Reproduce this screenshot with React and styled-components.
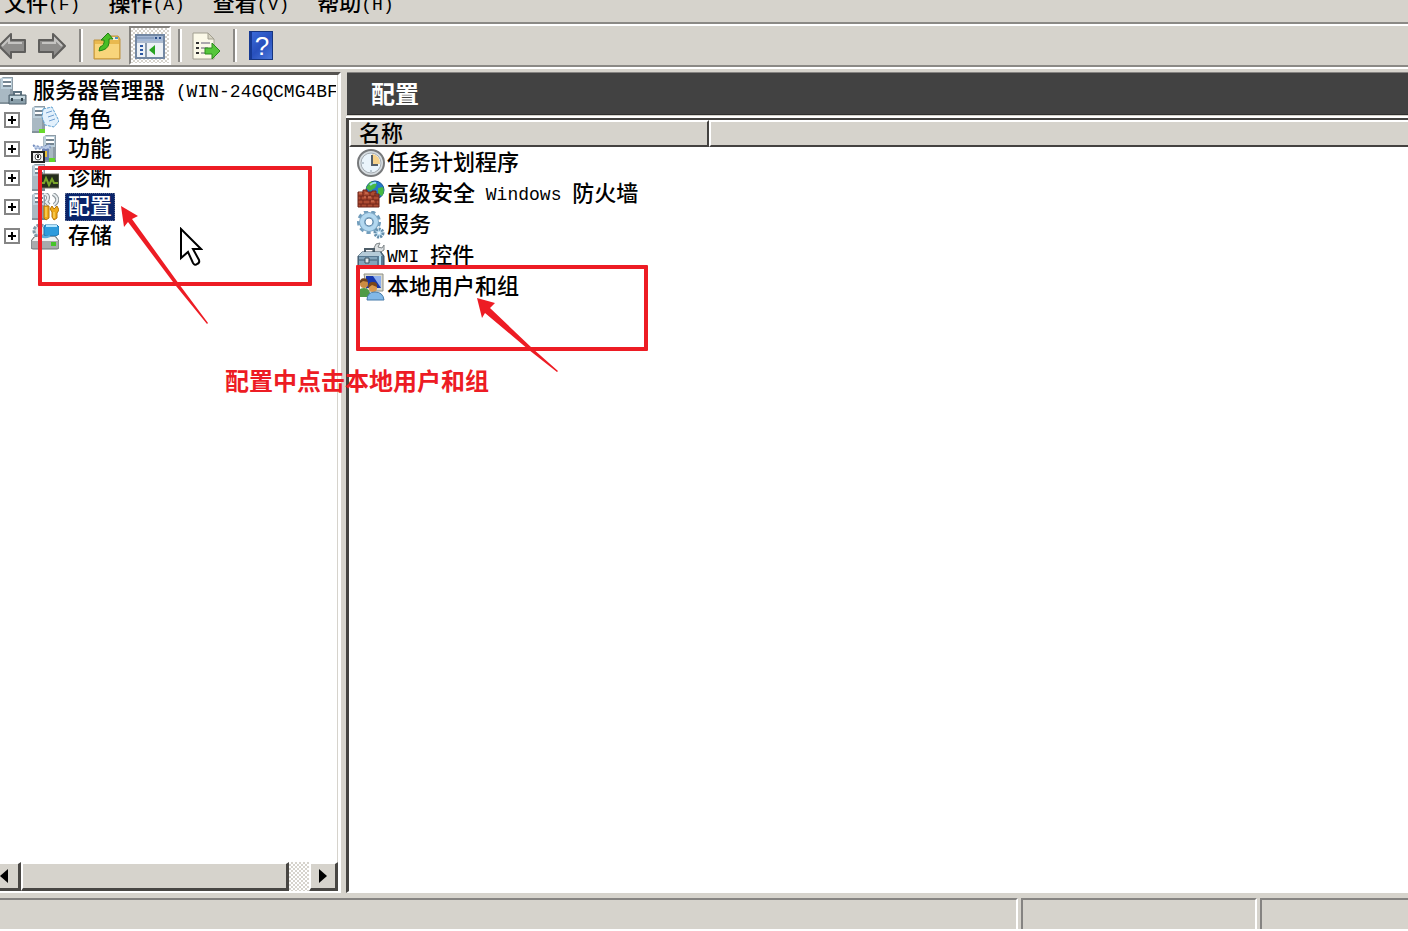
import React, { useState } from "react";
import styled, { createGlobalStyle, css } from "styled-components";

const menus = [
  ["文件", "(F)"],
  ["操作", "(A)"],
  ["查看", "(V)"],
  ["帮助", "(H)"],
];

/* ---------- icons ---------- */

const Tower = ({ x = 0 }) => (
  <g transform={`translate(${x} 0)`}>
    <path d="M1 2l3-2h10v27H1z" fill="#8e9ca6" />
    <path d="M1 2h10v25H1z" fill="#a9b9c3" />
    <path d="M2 1h11v11H2z" fill="#bccfdb" />
    <path d="M4 3h8M4 7h8" stroke="#fff" strokeWidth="2" />
    <path d="M4 5h8M4 9h8" stroke="#2f3d48" strokeWidth="1" />
    <path d="M1 26h13" stroke="#5f6d74" />
  </g>
);

const ServerIcon = () => (
  <Icon viewBox="0 0 28 28">
    <Tower x={-1} />
    <path d="M14 18v-3h7v3" fill="none" stroke="#5d7280" strokeWidth="2" />
    <path d="M9 18h17v9H9z" fill="#8ba0ab" stroke="#4d5f6b" />
    <path d="M10 19h15v3H10z" fill="#c5d6de" />
    <path d="M12 21v3M22 21v3" stroke="#33434d" strokeWidth="2" />
  </Icon>
);

const RolesIcon = () => (
  <Icon viewBox="0 0 28 28">
    <Tower />
    <path d="M8 23h6v4H8z" fill="#68d92d" />
    <path d="M12 3l9-2 7 14-5 6-9-2-3-8z" fill="#e3f1fc" stroke="#5c9fd0" strokeDasharray="3 1" />
    <path d="M15 7l6-2M17 11l6-2M18 15l6-2" stroke="#6f9ed0" strokeWidth="1" />
  </Icon>
);

const FeaturesIcon = () => (
  <Icon viewBox="0 0 28 28">
    <Tower x={11} />
    <path d="M2 10l9 2 8-3v5H4z" fill="#b9cae6" stroke="#6681b5" strokeDasharray="2 2" />
    <path d="M11 14h7v11h-7z" fill="#6c7fb1" />
    <path d="M13 16h3v6h-3z" fill="#e7bd35" />
    <path d="M1 17h12v10H1z" fill="#efefef" stroke="#222" strokeWidth="2" />
    <circle cx="7" cy="22" r="3" fill="#fff" stroke="#555" />
    <path d="M6 20h2v3H6z" fill="#222" />
    <path d="M18 23h6v4h-6z" fill="#62d52c" />
  </Icon>
);

const DiagnosticsIcon = () => (
  <Icon viewBox="0 0 28 28">
    <Tower />
    <path d="M9 10h19v14H9z" fill="#252e1c" stroke="#77756b" />
    <path d="M10 19h3l2-5 3 7 3-6 2 4h4" fill="none" stroke="#7ba52b" strokeWidth="2" />
  </Icon>
);

const ConfigIcon = () => (
  <Icon viewBox="0 0 28 28">
    <Tower />
    <path d="M13 1c5 0 5 5 2 8l3 3M22 1c7 4 4 9 1 11" fill="none" stroke="#8c9499" strokeWidth="4" />
    <path d="M13 1c5 0 5 5 2 8l3 3M22 1c7 4 4 9 1 11" fill="none" stroke="#e8edef" strokeWidth="2" />
    <path d="M13 13h5v12l-3 2-2-2zM21 13l2 3 3-3 2 4-2 3v5l-3 2-2-3v-5l-2-3z" fill="#efaa19" stroke="#b57408" />
    <path d="M15 14v10M23 19v6" stroke="#ffe47b" strokeWidth="1" />
  </Icon>
);

const StorageIcon = () => (
  <Icon viewBox="0 0 28 28">
    <circle cx="9" cy="9" r="6" fill="#dbe5e9" stroke="#8199a7" strokeWidth="3" strokeDasharray="3 1" />
    <path d="M14 3h12l2 2v7l-3 2H14l-1-2V5z" fill="#2f9bdc" stroke="#1c73ac" />
    <path d="M15 3h11v2H15z" fill="#b6e7ff" />
    <path d="M3 15h22l3 4v6q0 2-2 2H2q-2 0-2-2v-6z" fill="#a8aaac" stroke="#6f7375" />
    <path d="M4 15h20l3 4H1z" fill="#f1f2f2" />
    <path d="M20 20h5v4h-5z" fill="#45c529" />
    <path d="M7 12q5 5 12 2" fill="none" stroke="#58aede" strokeWidth="2" />
  </Icon>
);

const ClockIcon = () => (
  <Icon viewBox="0 0 28 28">
    <circle cx="14" cy="14" r="13" fill="#d7dde1" stroke="#77797b" strokeWidth="2" />
    <circle cx="14" cy="14" r="10" fill="#eaf4fb" stroke="#a5acb2" strokeWidth="1" />
    <path d="M15 5a9 9 0 0 1 8 10h-8z" fill="#f6d28a" />
    <path d="M15 6v10h6" fill="none" stroke="#555f68" strokeWidth="2" />
    <path d="M14 21v2M5 14h2" stroke="#8799a7" strokeWidth="1" />
  </Icon>
);

const FirewallIcon = () => (
  <Icon viewBox="0 0 28 28">
    <circle cx="18" cy="10" r="9" fill="#2378ca" stroke="#145290" />
    <path d="M13 2q5-1 7 2l-2 4-5 3-4-3zM21 8l5-1q2 5-1 9l-4-2z" fill="#47b942" />
    <path d="M13 5q3-3 6-2" fill="none" stroke="#9adff8" strokeWidth="2" />
    <path d="M1 12h5v-2h4v2h5v-1h4v3h3v13H1z" fill="#ad4b32" stroke="#6f2519" />
    <path d="M1 16h21M1 20h21M1 24h21M6 12v4M13 12v4M18 13v3M4 16v4M10 16v4M16 16v4M6 20v4M13 20v4M19 20v4M4 24v3M10 24v3M16 24v3" stroke="#6f2519" strokeWidth="1" />
    <path d="M2 13h3M7 17h2M14 21h3M8 13h3M11 17h3" stroke="#df8061" strokeWidth="1" />
  </Icon>
);

const GearsIcon = () => (
  <Icon viewBox="0 0 28 28">
    <circle cx="12" cy="11" r="10" fill="none" stroke="#719dbc" strokeWidth="4" strokeDasharray="4 3" />
    <circle cx="12" cy="11" r="7" fill="none" stroke="#7fa9c6" strokeWidth="6" />
    <circle cx="12" cy="11" r="7" fill="none" stroke="#b3d8f0" strokeWidth="4" />
    <circle cx="12" cy="11" r="4" fill="#fff" stroke="#638cae" />
    <circle cx="22" cy="22" r="4" fill="#c4e1f3" stroke="#648eab" strokeWidth="3" strokeDasharray="2 1" />
    <circle cx="22" cy="22" r="1" fill="#fff" />
  </Icon>
);

const ToolboxIcon = () => (
  <Icon viewBox="0 0 28 28">
    <path d="M15 10l4-8 4-1-2 4 4 1 2-3v5l-5 3z" fill="#dce0e2" stroke="#7e8588" />
    <path d="M8 10V7h9v3" fill="none" stroke="#4e5d68" strokeWidth="2" />
    <path d="M5 10h19l3 4v12H1V14z" fill="#587992" stroke="#344d5e" />
    <path d="M5 10h18l2 4H1z" fill="#b5cbd8" />
    <path d="M2 15h18v10H2z" fill="#83a5bb" />
    <path d="M2 18h18" stroke="#405f74" strokeWidth="1" />
    <path d="M8 16h4v5H8z" fill="#e1e7ea" stroke="#39515f" />
    <path d="M23 14v12" stroke="#b2e0f5" strokeWidth="2" />
  </Icon>
);

const UsersIcon = () => (
  <Icon viewBox="0 0 28 28">
    <path d="M7 1h19v17H10z" fill="#d8d9cf" stroke="#8f9085" />
    <path d="M9 3h15v12H9z" fill="#1737ad" />
    <path d="M16 3h8v12z" fill="#8fb0ee" />
    <circle cx="7" cy="11" r="4" fill="#cb8d43" />
    <path d="M2 11q1-8 8-5l1 3-5-1z" fill="#6e421e" />
    <path d="M0 24q0-9 7-9 6 0 7 9z" fill="#4f9a46" />
    <circle cx="16" cy="15" r="4" fill="#d99a50" />
    <path d="M11 15q0-7 5-6 5 0 4 5l-5-2z" fill="#7b4619" />
    <path d="M10 27q0-8 8-8t9 8z" fill="#82b8e7" stroke="#477ba9" />
  </Icon>
);

const ArrowIcon = ({ right }) => (
  <Icon viewBox="0 0 28 28">
    <g transform={right ? "translate(28 0) scale(-1 1)" : undefined}>
      <path d="M1 14L13 2v6h14v12H13v6z" fill="#8f8e8c" stroke="#5f5e5c" strokeWidth="2" strokeLinejoin="round" />
      <path d="M4 14l7-7v4h13" fill="none" stroke="#c5c4c2" strokeWidth="2" />
    </g>
  </Icon>
);

const FolderUpIcon = () => (
  <Icon viewBox="0 0 28 28">
    <path d="M1 8h9l3-4h12l2 3v20H1z" fill="#e9b94e" stroke="#be9341" />
    <path d="M2 12h24v14H2z" fill="#f8d57b" />
    <path d="M17 5h8v3h-8z" fill="#f6f0d8" />
    <path d="M22 5h3v2h-3z" fill="#4c91c9" />
    <path d="M6 19l1-4q5-2 4-7H8l7-7 5 6h-4q1 9-6 11z" fill="#48be26" stroke="#218013" />
  </Icon>
);

const PaneIcon = () => (
  <Icon $w={30} viewBox="0 0 30 28">
    <path d="M1 3h28v23H1z" fill="#eef2f6" stroke="#7287a2" strokeWidth="2" />
    <path d="M2 4h26v5H2z" fill="#a4b8d5" />
    <path d="M2 10h26M2 6h17" stroke="#6e86a9" strokeWidth="1" />
    <path d="M20 6h2M24 6h2" stroke="#294c87" strokeWidth="2" />
    <path d="M11 11v14" stroke="#8a9bad" strokeWidth="2" />
    <path d="M5 14h3M5 18h3M5 22h3" stroke="#2b57a1" strokeWidth="2" />
    <path d="M20 13v10l-6-5z" fill="#27a321" />
  </Icon>
);

const ExportIcon = () => (
  <Icon $w={30} viewBox="0 0 30 28">
    <path d="M2 1h15l6 6v20H2z" fill="#fbf9e8" stroke="#a29f90" />
    <path d="M17 1v6h6z" fill="#d7d4c2" stroke="#a29f90" />
    <path d="M5 11h3M5 16h3M5 21h3" stroke="#333" strokeWidth="2" />
    <path d="M10 11h9M10 16h7M10 21h7" stroke="#5f5870" strokeWidth="1" />
    <path d="M14 16h7v-5l8 8-8 8v-5h-7z" fill="#55c63a" stroke="#2c8b1d" />
  </Icon>
);

const CursorIcon = () => (
  <svg width="24" height="40" viewBox="0 0 24 40">
    <path
      d="M2 2v29l7-6 5 11q2 3 4 1 3-1 2-4l-6-11h8z"
      fill="#fff"
      stroke="#000"
      strokeWidth="2"
    />
  </svg>
);

const Triangle = ({ right }) => (
  <svg width="8" height="14" viewBox="0 0 8 14" aria-hidden="true">
    <path d={right ? "M0 0v14l8-7z" : "M8 0v14L0 7z"} fill="#000" />
  </svg>
);

const nodes = [
  { name: "角色", icon: RolesIcon },
  { name: "功能", icon: FeaturesIcon },
  { name: "诊断", icon: DiagnosticsIcon },
  { name: "配置", icon: ConfigIcon },
  { name: "存储", icon: StorageIcon },
];

const App = () => {
  const [selected, setSelected] = useState("配置");

  const items = [
    { name: "任务计划程序", icon: ClockIcon },
    { name: <>高级安全<Latin> Windows </Latin>防火墙</>, icon: FirewallIcon },
    { name: "服务", icon: GearsIcon },
    { name: <><Latin>WMI </Latin>控件</>, icon: ToolboxIcon },
    { name: "本地用户和组", icon: UsersIcon },
  ];

  return (
    <Window>
      <GlobalStyle />
      <MenuBar>
        {menus.map(([label, key]) => (
          <MenuButton key={key}>
            {label}
            <Latin>{key}</Latin>
          </MenuButton>
        ))}
      </MenuBar>
      <Toolbar>
        <ToolButton aria-label="后退"><ArrowIcon /></ToolButton>
        <ToolButton aria-label="前进"><ArrowIcon right /></ToolButton>
        <Separator />
        <ToolButton aria-label="向上"><FolderUpIcon /></ToolButton>
        <ToolButton aria-label="显示/隐藏控制台树" aria-pressed="true" $pressed><PaneIcon /></ToolButton>
        <Separator />
        <ToolButton aria-label="导出列表"><ExportIcon /></ToolButton>
        <Separator />
        <ToolButton aria-label="帮助"><HelpBook>?</HelpBook></ToolButton>
      </Toolbar>
      <Body>
        <TreePane>
          <Tree>
            <RootRow>
              <ServerIcon />
              <Label>
                服务器管理器<Latin> (WIN-24GQCMG4BF</Latin>
              </Label>
            </RootRow>
            {nodes.map(({ name, icon: NodeIcon }) => (
              <TreeRow key={name}>
                <Expander aria-label={`展开${name}`} />
                <NodeIcon />
                <Label as="button" $selected={name === selected} onClick={() => setSelected(name)}>
                  {name}
                </Label>
              </TreeRow>
            ))}
          </Tree>
          <ScrollBar>
            <ScrollButton $first aria-label="向左滚动"><Triangle /></ScrollButton>
            <Thumb />
            <Track />
            <ScrollButton aria-label="向右滚动"><Triangle right /></ScrollButton>
          </ScrollBar>
        </TreePane>
        <Main>
          <Title>{selected}</Title>
          <ListPane>
            <Table>
              <colgroup>
                <col width="360" />
                <col />
              </colgroup>
              <thead>
                <tr>
                  <HeadCell>名称</HeadCell>
                  <HeadCell aria-label="说明" />
                </tr>
              </thead>
              <tbody>
                {items.map(({ name, icon: ItemIcon }, i) => (
                  <tr key={i}>
                    <td>
                      <Item>
                        <ItemIcon />
                        <span>{name}</span>
                      </Item>
                    </td>
                    <td />
                  </tr>
                ))}
              </tbody>
            </Table>
          </ListPane>
        </Main>
      </Body>
      <StatusBar>
        <StatusCell />
        <StatusCell $w={236} />
        <StatusCell $w={148} />
      </StatusBar>

      {/* red marks and pointer drawn over the window */}
      <Mark $x={38} $y={166} $w={274} $h={120} />
      <Mark $x={356} $y={265} $w={292} $h={86} />
      <Arrows width="660" height="400" viewBox="0 0 660 400">
        <path d="M121 206l17 10-6 3 47 65 29 39-1 1-31-38-48-64-4 5z" />
        <path d="M477 298l18 5-5 5 42 40 26 23-1 1-28-22-44-37-3 5z" />
      </Arrows>
      <Note>配置中点击本地用户和组</Note>
      <Pointer><CursorIcon /></Pointer>
    </Window>
  );
};

const GlobalStyle = createGlobalStyle`
  * {
    box-sizing: border-box;
  }
  body {
    margin: 0;
    overflow: hidden;
    background: #fff;
  }
  button {
    margin: 0;
    padding: 0;
    border: 0;
    background: none;
    font: inherit;
    color: inherit;
  }
`;

const raised = css`
  background: #d6d3cc;
  border: solid;
  border-width: 2px 3px 3px 2px;
  border-color: #fff #484643 #484643 #fff;
`;

const Window = styled.div`
  position: relative;
  display: flex;
  flex-direction: column;
  height: 100vh;
  overflow: hidden;
  background: #d6d3cc;
  color: #000;
  font-family: "Liberation Sans", "Noto Sans CJK SC", sans-serif;
  font-size: 22px;
  font-weight: 500;
  line-height: 28px;
`;
const Latin = styled.span`
  font-family: "Liberation Mono", monospace;
  font-size: 18px;
  line-height: 20px;
  vertical-align: 1px;
  white-space: pre;
`;
const MenuBar = styled.nav`
  display: flex;
  align-items: center;
  flex: none;
  gap: 28px;
  height: 38px;
  margin-top: -14px;
  padding: 0 4px;
  border-bottom: 2px solid #8b8985;
`;
const MenuButton = styled.button`
  white-space: nowrap;
`;
const Toolbar = styled.div`
  display: flex;
  align-items: center;
  flex: none;
  height: 43px;
  margin-left: -8px;
  border-top: 2px solid #fff;
  border-bottom: 2px solid #8b8985;
`;
const ToolButton = styled.button`
  display: flex;
  align-items: center;
  justify-content: center;
  width: 40px;
  height: 39px;
  ${(p) =>
    p.$pressed &&
    css`
      width: 42px;
      margin-left: 2px;
      border: 2px solid;
      border-color: #85837f #fff #fff #85837f;
      background: repeating-conic-gradient(#d6d3cc 0 25%, #fff 0 50%) 0 0 / 4px 4px;
    `}
`;
const Separator = styled.span`
  width: 4px;
  height: 33px;
  margin: 0 4px 0 7px;
  border-left: 2px solid #8b8985;
  border-right: 2px solid #fff;
`;
const Icon = styled.svg`
  flex: none;
  width: ${(p) => p.$w || 28}px;
  height: 28px;
`;
const HelpBook = styled.span`
  width: 24px;
  height: 29px;
  border: 1px solid #17357f;
  border-left: 3px solid #173a94;
  background: linear-gradient(135deg, #3a6ad8, #2850bd 50%, #4b78dc);
  color: #fff;
  font-family: "Liberation Sans", sans-serif;
  font-size: 26px;
  font-weight: normal;
  line-height: 28px;
  text-align: center;
`;
const Body = styled.div`
  display: flex;
  flex: 1;
  gap: 5px;
  min-height: 0;
  padding-top: 3px;
  border-top: 2px solid #fff;
`;
const TreePane = styled.aside`
  display: flex;
  flex-direction: column;
  width: 341px;
  border-top: 3px solid #555350;
  border-right: 3px solid #fff;
  border-bottom: 2px solid #fff;
  box-shadow: inset -1px 0 #d6d3cc;
  background: #fff;
`;
const Tree = styled.ul`
  flex: 1;
  margin: 0;
  padding: 1px 0 0;
  overflow: hidden;
  list-style: none;
`;
const TreeRow = styled.li`
  display: flex;
  align-items: center;
  height: 29px;
  padding-left: 4px;
  white-space: nowrap;

  ${Icon} {
    margin: 0 6px 0 11px;
  }
`;
const RootRow = styled(TreeRow)`
  width: 336px;
  padding-left: 0;
  overflow: hidden;

  ${Icon} {
    margin: 0 2px 0 0;
  }
`;
const Label = styled.span`
  height: 28px;
  padding: 0 3px;
  line-height: 28px;
  ${(p) =>
    p.$selected &&
    css`
      background: #0a246a;
      color: #fff;
      outline: 1px dotted #5c6a8e;
      outline-offset: -1px;
    `}
`;
const Expander = styled.button`
  width: 16px;
  height: 16px;
  border: 2px solid #858585;
  background:
    linear-gradient(#000, #000) center / 8px 2px no-repeat,
    linear-gradient(#000, #000) center / 2px 8px no-repeat,
    #fff;
`;
const ScrollBar = styled.div`
  display: flex;
  flex: none;
  height: 29px;
`;
const ScrollButton = styled.button`
  ${raised}
  display: flex;
  align-items: center;
  justify-content: center;
  width: 29px;
  ${(p) =>
    p.$first &&
    css`
      width: 21px;
      padding-right: 10px;
      border-left: 0;
    `}
`;
const Thumb = styled.div`
  ${raised}
  flex: 1;
`;
const Track = styled.div`
  width: 20px;
  background: repeating-conic-gradient(#d6d3cc 0 25%, #fff 0 50%) 0 0 / 4px 4px;
`;
const Main = styled.main`
  display: flex;
  flex: 1;
  flex-direction: column;
  min-width: 0;
`;
const Title = styled.h1`
  height: 43px;
  margin: 0 0 0 1px;
  padding-left: 24px;
  border-top: 1px solid #858381;
  border-bottom: 1px solid #2f2f2f;
  background: #424242;
  color: #fff;
  font-size: 24px;
  font-weight: bold;
  line-height: 44px;
`;
const ListPane = styled.section`
  flex: 1;
  margin-top: 3px;
  border: solid #444240;
  border-width: 2px 0 0 3px;
  border-bottom: 2px solid #fff;
  box-shadow: 0 -2px #fff;
  background: #fff;
`;
const Table = styled.table`
  width: 100%;
  border-collapse: separate;
  border-spacing: 0;
  table-layout: fixed;

  td {
    height: 31px;
    padding: 0;
  }
`;
const HeadCell = styled.th`
  height: 27px;
  padding: 0 0 0 8px;
  border: 2px solid;
  border-color: #fff #444240 #444240 #fff;
  background: #d6d3cc;
  font-weight: 500;
  line-height: 23px;
  text-align: left;

  &:last-child {
    border-right: 0;
  }
`;
const Item = styled.div`
  display: flex;
  align-items: center;
  gap: 2px;
  padding-left: 8px;
  white-space: pre;
`;
const StatusBar = styled.footer`
  display: flex;
  flex: none;
  gap: 3px;
  height: 38px;
  padding-top: 5px;
  border-bottom: 2px solid #fff;
`;
const StatusCell = styled.div`
  flex: ${(p) => (p.$w ? `0 0 ${p.$w}px` : 1)};
  border: solid;
  border-width: 2px 2px 0;
  border-color: #858381 #fff #fff #858381;

  &:first-child {
    border-left: 0;
  }
  &:last-of-type {
    border-right: 0;
  }
`;
const Mark = styled.div`
  position: absolute;
  left: ${(p) => p.$x}px;
  top: ${(p) => p.$y}px;
  width: ${(p) => p.$w}px;
  height: ${(p) => p.$h}px;
  border: 4px solid #ed1c24;
  border-radius: 1px;
  pointer-events: none;
`;
const Arrows = styled.svg`
  position: absolute;
  left: 0;
  top: 0;
  fill: #ed1c24;
  pointer-events: none;
`;
const Note = styled.p`
  position: absolute;
  left: 225px;
  top: 368px;
  margin: 0;
  color: #ed1c24;
  font-size: 24px;
  font-weight: bold;
  white-space: nowrap;
  pointer-events: none;
`;
const Pointer = styled.div`
  position: absolute;
  left: 179px;
  top: 227px;
  pointer-events: none;
`;

export default App;
